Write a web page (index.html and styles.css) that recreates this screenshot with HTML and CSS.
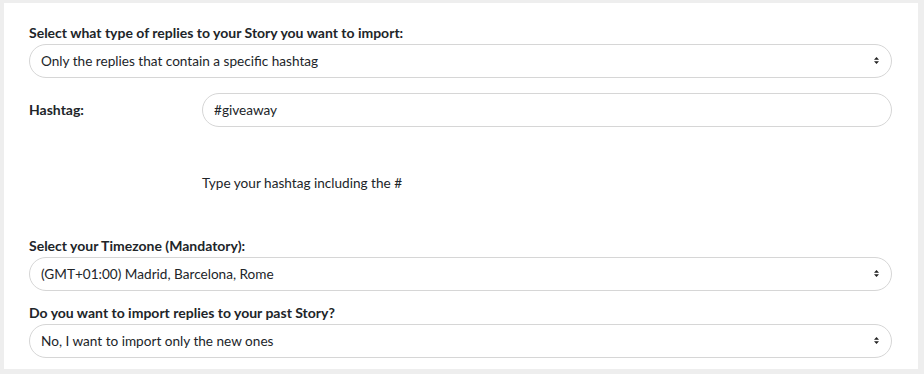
FILE: index.html
```html
<!DOCTYPE html>
<html lang="en">
<head>
    <meta charset="UTF-8">
    <meta name="viewport" content="width=device-width, initial-scale=1.0">
    <title>Import Story replies</title>
    <link rel="stylesheet" href="styles.css">
</head>
<body>
    <div class="panel">
        <label class="field-label" for="replyType">Select what type of replies to your Story you want to import:</label>
        <div class="select-wrap">
            <select id="replyType" class="pill">
                <option>Only the replies that contain a specific hashtag</option>
                <option>All the replies</option>
            </select>
            <svg class="arrows" width="5" height="7" viewBox="0 0 5 7"><path d="M2.5 0 L5 2.8 H0 Z M2.5 7 L5 4.2 H0 Z" fill="#222"/></svg>
        </div>

        <div class="hashtag-row">
            <label class="field-label" for="hashtag">Hashtag:</label>
            <input type="text" id="hashtag" class="pill" value="#giveaway">
        </div>
        <p class="help">Type your hashtag including the #</p>

        <label class="field-label timezone" for="timezone">Select your Timezone (Mandatory):</label>
        <div class="select-wrap">
            <select id="timezone" class="pill">
                <option>(GMT+01:00) Madrid, Barcelona, Rome</option>
            </select>
            <svg class="arrows" width="5" height="7" viewBox="0 0 5 7"><path d="M2.5 0 L5 2.8 H0 Z M2.5 7 L5 4.2 H0 Z" fill="#222"/></svg>
        </div>

        <label class="field-label past" for="past">Do you want to import replies to your past Story?</label>
        <div class="select-wrap">
            <select id="past" class="pill">
                <option>No, I want to import only the new ones</option>
                <option>Yes, import the past replies too</option>
            </select>
            <svg class="arrows" width="5" height="7" viewBox="0 0 5 7"><path d="M2.5 0 L5 2.8 H0 Z M2.5 7 L5 4.2 H0 Z" fill="#222"/></svg>
        </div>
    </div>
</body>
</html>
```
FILE: styles.css
```css
body {
    margin: 0;
    background-color: #eeeeee;
    font-family: "Lato", "Noto Sans", sans-serif;
    font-size: 13.6px;
    color: #212529;
}
.panel {
    background-color: #ffffff;
    margin: 3px 6px 5px 4px;
    padding: 21px 26px 11px 25px;
}
.field-label {
    display: block;
    font-weight: bold;
    font-size: 14px;
    line-height: 18px;
    margin-bottom: 2px;
}
.select-wrap {
    position: relative;
}
.pill {
    display: block;
    width: 100%;
    box-sizing: border-box;
    height: 34px;
    padding: 0 30px 0 11px;
    border: 1px solid #d6d6d6;
    border-radius: 17px;
    background-color: #ffffff;
    font-family: inherit;
    font-size: 13.6px;
    color: #212529;
    appearance: none;
    -webkit-appearance: none;
    outline: none;
}
.arrows {
    position: absolute;
    right: 13px;
    top: 13px;
    pointer-events: none;
}
.hashtag-row {
    display: grid;
    grid-template-columns: 173px 1fr;
    align-items: center;
    margin-top: 15px;
}
.hashtag-row .field-label {
    margin-bottom: 0;
}
.help {
    margin: 47px 0 0 173px;
    line-height: 18px;
}
.timezone {
    margin-top: 45px;
}
.past {
    margin-top: 13px;
}
```
